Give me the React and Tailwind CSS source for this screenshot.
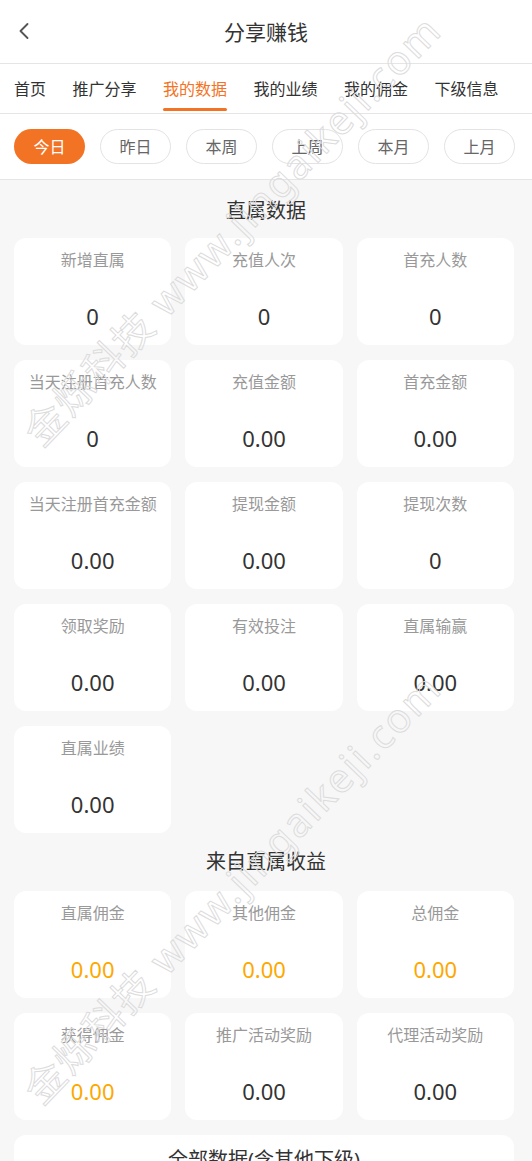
import React from 'react';
import { ChevronLeft } from 'lucide-react';

const tabs = ['首页', '推广分享', '我的数据', '我的业绩', '我的佣金', '下级信息'];
const ranges = ['今日', '昨日', '本周', '上周', '本月', '上月'];

const direct = [
  { label: '新增直属', value: '0' },
  { label: '充值人次', value: '0' },
  { label: '首充人数', value: '0' },
  { label: '当天注册首充人数', value: '0' },
  { label: '充值金额', value: '0.00' },
  { label: '首充金额', value: '0.00' },
  { label: '当天注册首充金额', value: '0.00' },
  { label: '提现金额', value: '0.00' },
  { label: '提现次数', value: '0' },
  { label: '领取奖励', value: '0.00' },
  { label: '有效投注', value: '0.00' },
  { label: '直属输赢', value: '0.00' },
  { label: '直属业绩', value: '0.00' }
];

const income = [
  { label: '直属佣金', value: '0.00', gold: true },
  { label: '其他佣金', value: '0.00', gold: true },
  { label: '总佣金', value: '0.00', gold: true },
  { label: '获得佣金', value: '0.00', gold: true },
  { label: '推广活动奖励', value: '0.00' },
  { label: '代理活动奖励', value: '0.00' }
];

const StatCard = ({ label, value, gold }) => (
  <div className="h-[107px] bg-white rounded-xl flex flex-col items-center pt-[11px]">
    <span className="text-base leading-[22px] text-[#999] whitespace-nowrap">{label}</span>
    <span className={`mt-[30px] text-[22px] leading-[30px] ${gold ? 'text-[#fda800]' : 'text-[#333]'}`}>
      {value}
    </span>
  </div>
);

const SectionTitle = ({ children, className }) => (
  <h2 className={`text-center text-xl leading-[28px] text-[#333] ${className}`}>{children}</h2>
);

// diagonal site watermark laid over the page
const Watermark = ({ top }) => (
  <div
    className="absolute left-[-88px] w-[640px] text-center text-[40px] leading-none tracking-[2px] text-transparent [-webkit-text-stroke:1px_#dcdcdc] -rotate-[46deg] whitespace-nowrap"
    style={{ top }}
  >
    金烁科技 www.jingaikeji.com
  </div>
);

export default function App() {
  return (
    <div className="relative w-[532px] h-[1161px] overflow-hidden bg-[#f7f7f7] font-['Noto_Sans','Noto_Sans_CJK_SC',sans-serif]">
      {/* Header */}
      <div className="h-16 bg-white border-b border-[#e5e5e5] flex items-center relative pt-[3px]">
        <ChevronLeft className="absolute left-[10px] top-[17px] w-7 h-7 text-[#555]" strokeWidth={1.6} />
        <h1 className="flex-1 text-center text-[21px] text-[#333]">分享赚钱</h1>
      </div>

      {/* Tabs */}
      <div className="h-[50px] bg-white border-b border-[#e5e5e5] flex items-stretch px-[14px] gap-[26.5px]">
        {tabs.map((t) => (
          <div key={t} className="relative flex items-center">
            <span className={`text-base whitespace-nowrap ${t === '我的数据' ? 'text-[#f37325]' : 'text-[#333]'}`}>{t}</span>
            {t === '我的数据' && (
              <div className="absolute bottom-[2px] left-0 right-0 h-[3px] rounded-full bg-[#f37325]"></div>
            )}
          </div>
        ))}
      </div>

      {/* Range filters */}
      <div className="bg-white border-b border-[#e5e5e5] flex gap-[15px] px-[14px] pt-[15px] pb-[15px]">
        {ranges.map((r, i) => (
          <div
            key={r}
            className={`w-[71px] h-[35px] rounded-full flex items-center justify-center text-base ${
              i === 0 ? 'bg-[#f37325] text-white' : 'border border-[#e3e3e3] text-[#666]'
            }`}
          >
            {r}
          </div>
        ))}
      </div>

      {/* Direct data */}
      <SectionTitle className="mt-[17px] mb-[13px]">直属数据</SectionTitle>
      <div className="grid grid-cols-3 gap-x-[14px] gap-y-[15px] pl-[14px] pr-[18px]">
        {direct.map((s) => (
          <StatCard key={s.label} {...s} />
        ))}
      </div>

      {/* Income */}
      <SectionTitle className="mt-[15px] mb-[15px]">来自直属收益</SectionTitle>
      <div className="grid grid-cols-3 gap-x-[14px] gap-y-[15px] pl-[14px] pr-[18px]">
        {income.map((s) => (
          <StatCard key={s.label} {...s} />
        ))}
      </div>

      {/* All data */}
      <div className="ml-[14px] mr-[18px] mt-[15px] bg-white rounded-xl pt-[11px] pb-6">
        <SectionTitle>全部数据(含其他下级)</SectionTitle>
      </div>

      {/* Watermark overlay */}
      <div className="absolute inset-0 pointer-events-none">
        <Watermark top={210} />
        <Watermark top={868} />
      </div>
    </div>
  );
}
